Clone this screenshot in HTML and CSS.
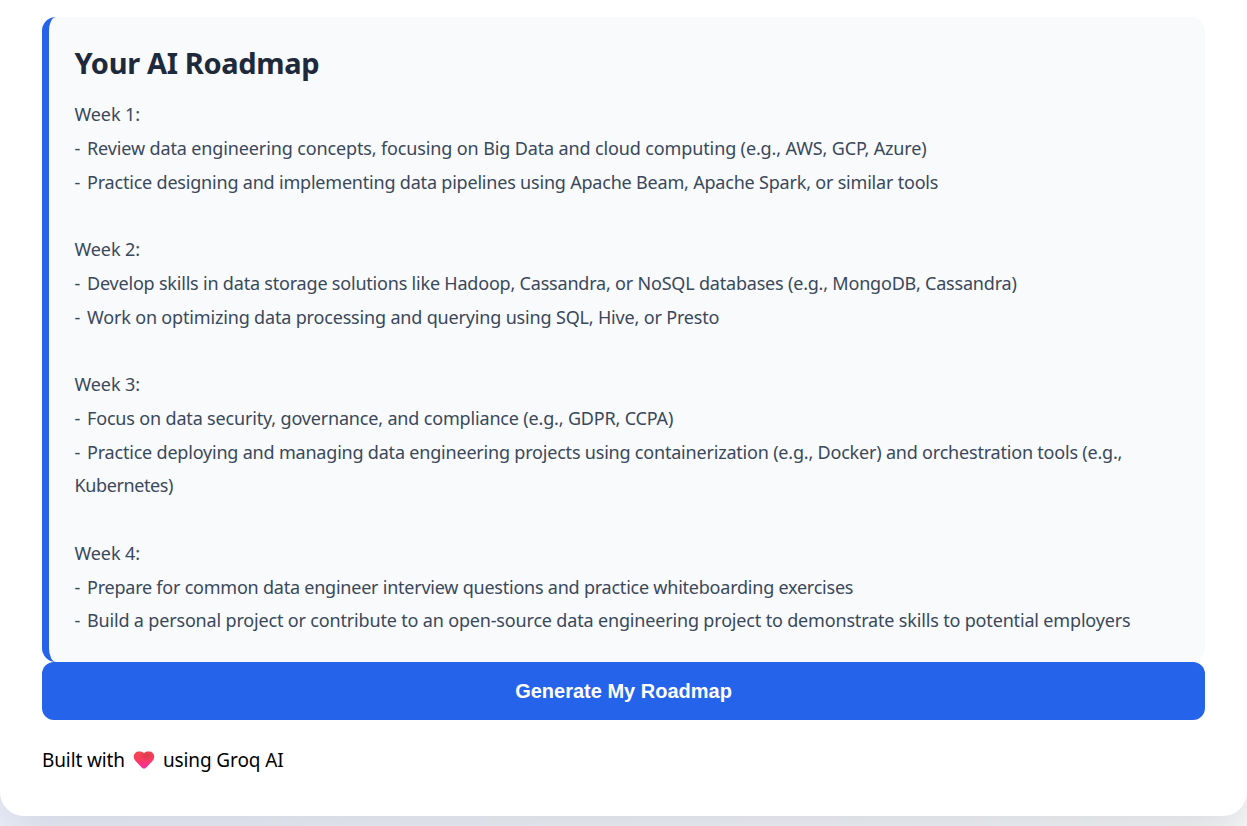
FILE: index.html
```html
<!DOCTYPE html>
<html lang="en">
<head>
<meta charset="utf-8">
<title>AI Roadmap</title>
<link rel="stylesheet" href="styles.css">
</head>
<body>
<main class="container">
  <section class="roadmap">
    <h2 class="roadmap-title">Your AI Roadmap</h2>
    <div class="roadmap-body">
      <p class="line">Week 1:</p>
      <p class="line fit-a"><span class="dash">- </span>Review data engineering concepts, focusing on Big Data and cloud computing (e.g., AWS, GCP, Azure)</p>
      <p class="line fit-c"><span class="dash">- </span>Practice designing and implementing data pipelines using Apache Beam, Apache Spark, or similar tools</p>
      <p class="line"></p>
      <p class="line">Week 2:</p>
      <p class="line fit-c"><span class="dash">- </span>Develop skills in data storage solutions like Hadoop, Cassandra, or NoSQL databases (e.g., MongoDB, Cassandra)</p>
      <p class="line fit-b"><span class="dash">- </span>Work on optimizing data processing and querying using SQL, Hive, or Presto</p>
      <p class="line"></p>
      <p class="line">Week 3:</p>
      <p class="line fit-b"><span class="dash">- </span>Focus on data security, governance, and compliance (e.g., GDPR, CCPA)</p>
      <p class="line fit-c"><span class="dash">- </span>Practice deploying and managing data engineering projects using containerization (e.g., Docker) and orchestration tools (e.g.,</p>
      <p class="line fit-e">Kubernetes)</p>
      <p class="line"></p>
      <p class="line">Week 4:</p>
      <p class="line fit-d"><span class="dash">- </span>Prepare for common data engineer interview questions and practice whiteboarding exercises</p>
      <p class="line fit-b"><span class="dash">- </span>Build a personal project or contribute to an open-source data engineering project to demonstrate skills to potential employers</p>
    </div>
  </section>
  <button class="generate" type="button">Generate My Roadmap</button>
  <footer class="footer"><span>Built with</span>
    <svg class="heart" viewBox="0 0 22 20">
      <defs>
        <linearGradient id="heart-fill" x1="0" y1="0" x2="0" y2="1">
          <stop offset="0" stop-color="#f04a50"/>
          <stop offset="0.5" stop-color="#fb3b61"/>
          <stop offset="1" stop-color="#f42ea6"/>
        </linearGradient>
        <radialGradient id="heart-shade" cx="0.62" cy="0.25" r="0.35">
          <stop offset="0" stop-color="#c92b45" stop-opacity="0.55"/>
          <stop offset="1" stop-color="#c92b45" stop-opacity="0"/>
        </radialGradient>
        <path id="heart" d="M11 18.600C9.800 18.600 8.800 17.500 7.500 16.200L3 11.500C1.500 9.900 .8 8.600 .8 6.600C.8 3.400 3 1.400 6 1.400C8.300 1.400 10 1.800 11 3.200C12 1.800 13.700 1.400 16 1.400C19 1.400 21.200 3.400 21.200 6.600C21.200 8.600 20.500 9.900 19 11.500L14.500 16.200C13.200 17.500 12.200 18.600 11 18.600Z"/>
      </defs>
      <use href="#heart" fill="url(#heart-fill)"/>
      <use href="#heart" fill="url(#heart-shade)"/>
    </svg>
    <span>using Groq AI</span></footer>
</main>
</body>
</html>
```
FILE: styles.css
```css
body {
  margin: 0;
  height: 826px;
  overflow: hidden;
  background: linear-gradient(90deg, #eef2ff, #f8fafc);
  font-family: "Segoe UI", "Noto Sans", sans-serif;
}
.container {
  box-sizing: border-box;
  height: 816px;
  padding: 17px 42px 0;
  background: #fff;
  border-radius: 0 0 24px 24px;
  box-shadow: 0 20px 50px rgba(0, 0, 0, 0.12);
}
.roadmap {
  box-sizing: border-box;
  height: 645px;
  padding: 25px 26px 0 25.5px;
  border-left: 7px solid #2563eb;
  border-radius: 14px;
  background: #f8fafc;
}
.roadmap-title {
  margin: 0 0 14px;
  font-size: 29px;
  line-height: 42px;
  letter-spacing: -0.35px;
  color: #1e293b;
}
.line {
  margin: 0;
  height: 33.75px;
  line-height: 33.75px;
  font-size: 18px;
  letter-spacing: -0.1px;
  color: #3a485b;
  white-space: nowrap;
}
.dash {
  display: inline-block;
  width: 12.5px;
}
.fit-a { letter-spacing: -0.128px; }
.fit-b { letter-spacing: -0.168px; }
.fit-c { letter-spacing: -0.198px; }
.fit-d { letter-spacing: -0.228px; }
.fit-e { letter-spacing: -0.4px; }
.generate {
  display: block;
  width: 100%;
  height: 58px;
  border: 0;
  border-radius: 12px;
  background: #2563eb;
  color: #fff;
  font: bold 20px "Liberation Sans", Arial, sans-serif;
}
.footer {
  display: flex;
  align-items: center;
  height: 28px;
  margin-top: 26px;
  font-size: 19px;
  letter-spacing: -0.12px;
  color: #000;
}
.heart {
  width: 22px;
  height: 20px;
  margin: 0 8px;
}
```
